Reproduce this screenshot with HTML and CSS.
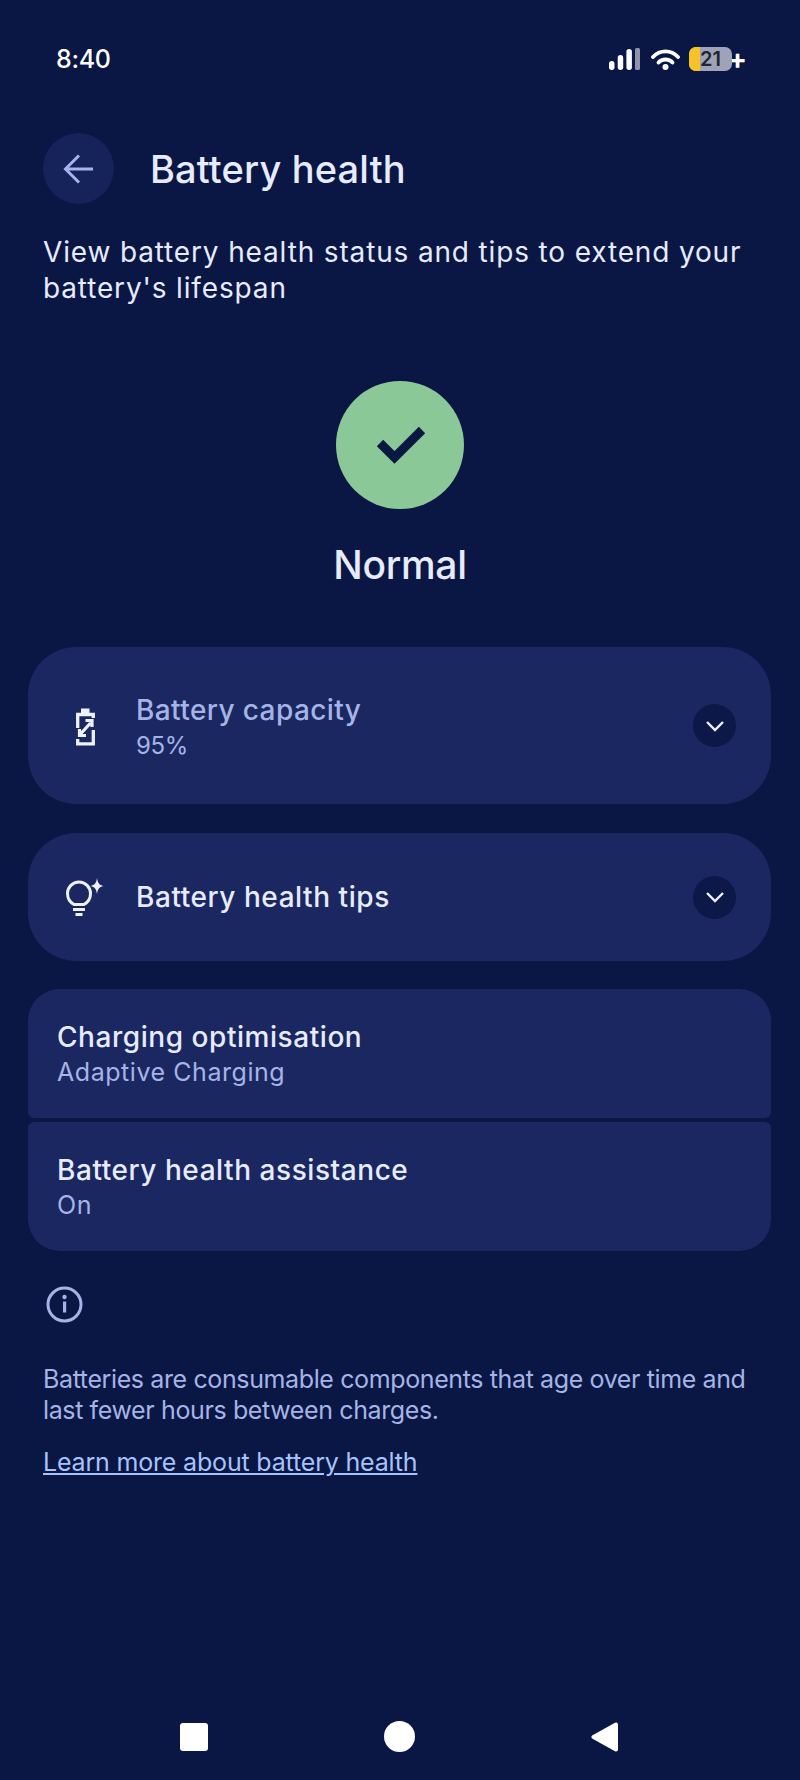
FILE: index.html
```html
<!DOCTYPE html>
<html lang="en">
<head>
    <meta charset="UTF-8">
    <meta name="viewport" content="width=device-width, initial-scale=1.0">
    <title>Battery health</title>
    <link rel="stylesheet" href="styles.css">
</head>
<body>
    <div class="page">
        <div class="status-bar">
            <span class="status-time">8:40</span>
            <div class="status-icons">
                <svg class="icon-signal" width="31" height="22" viewBox="0 0 31 22">
                    <rect x="0" y="13" width="5.500" height="9" rx="2.700" fill="#fff"/>
                    <rect x="8.700" y="7" width="5.500" height="15" rx="2.700" fill="#fff"/>
                    <rect x="17.400" y="1" width="5.500" height="21" rx="2.700" fill="#fff"/>
                    <rect x="26" y="0" width="5" height="22" rx="1.500" fill="#8d93ab"/>
                </svg>
                <svg class="icon-wifi" width="29" height="22" viewBox="0 0 29 22">
                    <path d="M2 9 C9 1.500 20 1.500 27 9" fill="none" stroke="#fff" stroke-width="3.800" stroke-linecap="round"/>
                    <path d="M7.500 14.500 C11 10.500 18 10.500 21.500 14.500" fill="none" stroke="#fff" stroke-width="3.800" stroke-linecap="round"/>
                    <circle cx="14.500" cy="19" r="3" fill="#fff"/>
                </svg>
                <div class="battery">
                    <span class="battery-fill"></span>
                    <span class="battery-level">21</span>
                </div>
                <span class="battery-plus">+</span>
            </div>
        </div>

        <header class="header">
            <a class="back-btn">
                <svg width="71" height="71" viewBox="0 0 71 71">
                    <path d="M50 36 H23 M36 22.500 L22.500 36 L36 49.500" fill="none" stroke="#a5b4ec" stroke-width="3"/>
                </svg>
            </a>
            <h1>Battery health</h1>
        </header>

        <p class="intro">View battery health status and tips to extend your battery's lifespan</p>

        <section class="status-hero">
            <div class="status-circle">
                <svg width="128" height="128" viewBox="0 0 128 128">
                    <path d="M44 62 L58.500 76.500 L86 49" fill="none" stroke="#0b1743" stroke-width="9"/>
                </svg>
            </div>
            <h2>Normal</h2>
        </section>

        <div class="card card-tall">
            <div class="card-icon">
                <svg width="27" height="40" viewBox="0 0 27 40">
                    <path d="M9 2.500 H17.500 V7 H9 Z" fill="#eef1ff"/>
                    <path d="M5.700 22 V8.500 H21.300 V12 M5.700 33 V37.800 H21.300 V24" fill="none" stroke="#eef1ff" stroke-width="3.300"/>
                    <path d="M8.500 28 L18.500 17 M13.500 14.500 H20 V21 M7.500 23 V29.500 H14" fill="none" stroke="#eef1ff" stroke-width="3.200"/>
                </svg>
            </div>
            <div class="card-text">
                <div class="card-title muted">Battery capacity</div>
                <div class="card-sub percent">95%</div>
            </div>
            <div class="chevron">
                <svg width="20" height="14" viewBox="0 0 20 14">
                    <path d="M2 3 L10 11 L18 3" fill="none" stroke="#eef1ff" stroke-width="2.400"/>
                </svg>
            </div>
        </div>

        <div class="card card-short">
            <div class="card-icon">
                <svg width="42" height="42" viewBox="0 0 42 42">
                    <path d="M10 28.500 C5.500 26 3.500 21.500 3.500 17.500 A11.500 11.500 0 0 1 26.500 17.500 C26.500 21.500 24.500 26 20 28.500 Z" fill="none" stroke="#eef1ff" stroke-width="3"/>
                    <path d="M9 33.500 H21 M11.500 38.500 H18.500" fill="none" stroke="#eef1ff" stroke-width="3"/>
                    <path d="M33 2 C33.800 7 35 9.200 40 10 C35 10.800 33.800 13 33 18 C32.200 13 31 10.800 26 10 C31 9.200 32.200 7 33 2 Z" fill="#eef1ff"/>
                </svg>
            </div>
            <div class="card-text">
                <div class="card-title">Battery health tips</div>
            </div>
            <div class="chevron">
                <svg width="20" height="14" viewBox="0 0 20 14">
                    <path d="M2 3 L10 11 L18 3" fill="none" stroke="#eef1ff" stroke-width="2.400"/>
                </svg>
            </div>
        </div>

        <div class="settings-group">
            <div class="setting-row">
                <div class="card-title">Charging optimisation</div>
                <div class="card-sub">Adaptive Charging</div>
            </div>
            <div class="setting-row">
                <div class="card-title">Battery health assistance</div>
                <div class="card-sub">On</div>
            </div>
        </div>

        <svg class="icon-info" width="37" height="37" viewBox="0 0 37 37">
            <circle cx="18.500" cy="18.500" r="16.500" fill="none" stroke="#a5b4e6" stroke-width="3"/>
            <circle cx="18.500" cy="11" r="2.200" fill="#a5b4e6"/>
            <rect x="17" y="15.500" width="3.200" height="11" fill="#a5b4e6"/>
        </svg>

        <p class="footnote">Batteries are consumable components that age over time and last fewer hours between charges.</p>
        <a class="learn-more">Learn more about battery health</a>

        <nav class="nav-bar">
            <span class="nav-square"></span>
            <span class="nav-circle"></span>
            <svg width="28" height="30" viewBox="0 0 28 30">
                <polygon points="2.500,15 25,2.500 25,27.500" fill="#fff" stroke="#fff" stroke-width="4" stroke-linejoin="round"/>
            </svg>
        </nav>
    </div>
</body>
</html>
```
FILE: styles.css
```css
:root {
    --page-bg: #0a1644;
    --card-bg: #1b2761;
    --text-light: #e6ebfd;
    --text-muted: #a5b4e6;
    --link-blue: #a6c4fb;
}

* {
    margin: 0;
    padding: 0;
    box-sizing: border-box;
    font-family: 'Inter', 'Open Sans', sans-serif;
}

body {
    background-color: var(--page-bg);
}

.page {
    display: flex;
    flex-direction: column;
    width: 800px;
    min-height: 1780px;
}

.status-bar {
    display: flex;
    justify-content: space-between;
    align-items: center;
    height: 38px;
    margin-top: 40px;
    padding: 0 57px 0 56px;
}

.status-time {
    color: white;
    font-size: 25px;
    font-weight: 500;
    letter-spacing: -0.3px;
}

.status-icons {
    display: flex;
    align-items: center;
}

.icon-wifi {
    margin-left: 11px;
}

.battery {
    position: relative;
    width: 43px;
    height: 24px;
    margin-left: 9px;
    border-radius: 7px;
    background: #9fa3b8;
    overflow: hidden;
    text-align: center;
}

.battery-fill {
    position: absolute;
    left: 0;
    top: 0;
    bottom: 0;
    width: 11px;
    background: #f8c326;
}

.battery-level {
    position: relative;
    color: #22242e;
    font-size: 20px;
    font-weight: 600;
    line-height: 24px;
}

.battery-plus {
    width: 15px;
    margin-left: -4px;
    color: white;
    font-size: 28px;
    font-weight: 700;
    line-height: 24px;
    text-align: center;
    text-shadow: 0 0 2px #0a1644;
}

.header {
    display: flex;
    align-items: center;
    height: 71px;
    margin-top: 55px;
    padding-left: 43px;
}

.back-btn {
    display: block;
    width: 71px;
    height: 71px;
    border-radius: 50%;
    background: #16225a;
}

.header h1 {
    margin-left: 36px;
    color: var(--text-light);
    font-size: 38px;
    font-weight: 500;
    letter-spacing: 0.15px;
    line-height: 48px;
}

.intro {
    margin-top: 30px;
    padding: 0 43px;
    color: var(--text-light);
    font-size: 28px;
    letter-spacing: 0.85px;
    line-height: 36px;
}

.status-hero {
    display: flex;
    flex-direction: column;
    align-items: center;
    margin-top: 75px;
}

.status-circle {
    width: 128px;
    height: 128px;
    border-radius: 50%;
    background: #8ac997;
}

.status-hero h2 {
    margin-top: 32px;
    color: var(--text-light);
    font-size: 39px;
    font-weight: 500;
    letter-spacing: -0.3px;
    line-height: 48px;
}

.card {
    display: flex;
    align-items: center;
    margin: 0 29px 0 28px;
    padding: 0 35px 0 30px;
    border-radius: 48px;
    background: var(--card-bg);
}

.card-tall {
    height: 157px;
    margin-top: 58px;
}

.card-tall .card-text {
    padding-top: 3px;
}

.card-short {
    height: 128px;
    margin-top: 29px;
}

.card-icon {
    display: flex;
    justify-content: center;
    width: 56px;
    margin: 0 23px 0 -1px;
}

.card-text {
    flex: 1;
}

.card-title {
    color: var(--text-light);
    font-size: 28px;
    font-weight: 500;
    letter-spacing: 0.55px;
    line-height: 36px;
}

.card-title.muted {
    color: var(--text-muted);
    letter-spacing: 0.4px;
}

.card-sub {
    color: var(--text-muted);
    font-size: 25px;
    letter-spacing: 0.55px;
    line-height: 35px;
}

.card-sub.percent {
    font-size: 24px;
    letter-spacing: -0.3px;
}

.chevron {
    display: flex;
    justify-content: center;
    align-items: center;
    width: 43px;
    height: 43px;
    border-radius: 50%;
    background: #0c1848;
}

.settings-group {
    display: flex;
    flex-direction: column;
    gap: 4px;
    margin: 28px 29px 0 28px;
}

.setting-row {
    height: 129px;
    padding: 30px 30px 0 29px;
    background: var(--card-bg);
}

.setting-row:first-child {
    border-radius: 32px 32px 6px 6px;
}

.setting-row:last-child {
    border-radius: 6px 6px 32px 32px;
}

.icon-info {
    display: block;
    margin: 35px 0 0 46px;
}

.footnote {
    margin-top: 41px;
    padding: 0 43px;
    color: var(--text-muted);
    font-size: 25px;
    letter-spacing: -0.38px;
    line-height: 31px;
}

.learn-more {
    margin: 21px 0 0 43px;
    color: var(--link-blue);
    font-size: 25px;
    letter-spacing: -0.18px;
    line-height: 31px;
    text-decoration: underline;
}

.nav-bar {
    display: flex;
    justify-content: space-between;
    align-items: center;
    margin-top: auto;
    padding: 0 181px 28px 180px;
}

.nav-square {
    width: 28px;
    height: 28px;
    border-radius: 3px;
    background: white;
}

.nav-circle {
    width: 31px;
    height: 31px;
    border-radius: 50%;
    background: white;
}
```
